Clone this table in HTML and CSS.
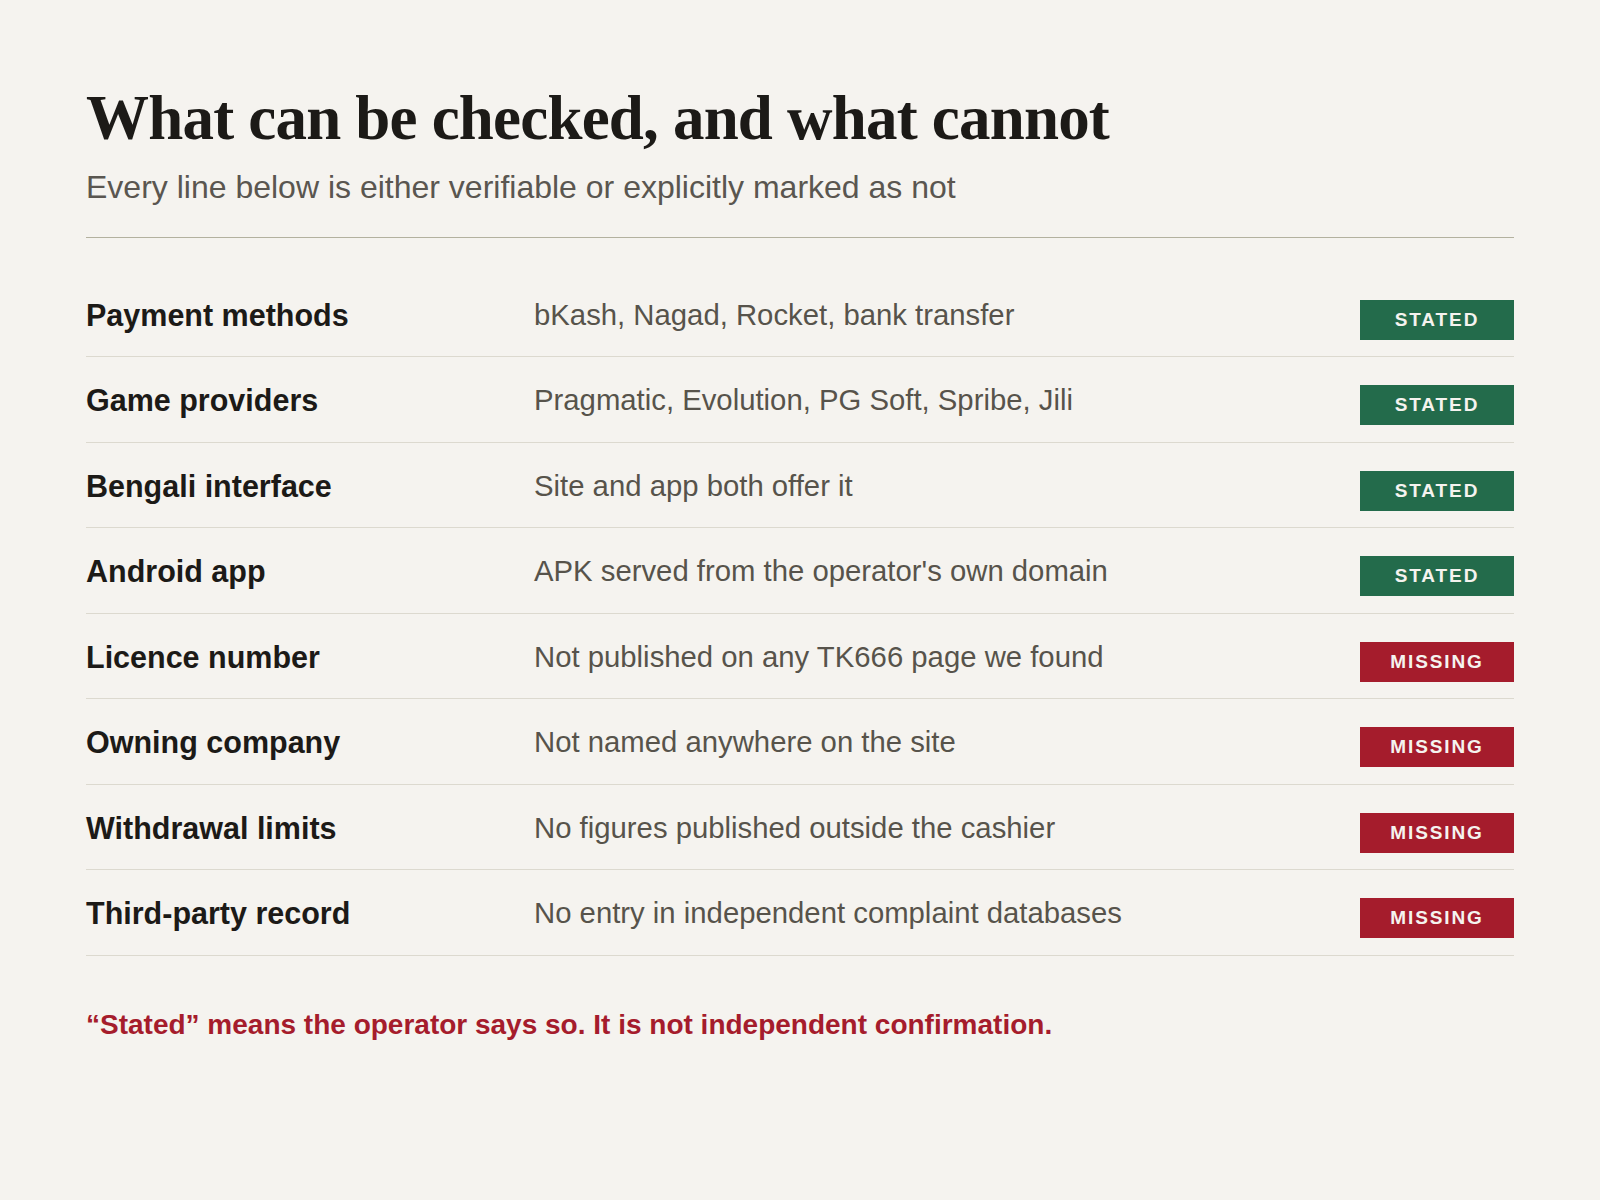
FILE: index.html
```html
<!DOCTYPE html>
<html lang="en">
<head>
<meta charset="utf-8">
<title>What can be checked</title>
<link rel="stylesheet" href="styles.css">
</head>
<body>
<main class="page">
  <header class="head">
    <h1 class="title">What can be checked, and what cannot</h1>
    <p class="sub">Every line below is either verifiable or explicitly marked as not</p>
  </header>
  <section class="rows">
    <div class="row"><div class="label">Payment methods</div><div class="value">bKash, Nagad, Rocket, bank transfer</div><span class="badge stated">STATED</span></div>
    <div class="row"><div class="label">Game providers</div><div class="value">Pragmatic, Evolution, PG Soft, Spribe, Jili</div><span class="badge stated">STATED</span></div>
    <div class="row"><div class="label">Bengali interface</div><div class="value">Site and app both offer it</div><span class="badge stated">STATED</span></div>
    <div class="row"><div class="label">Android app</div><div class="value">APK served from the operator's own domain</div><span class="badge stated">STATED</span></div>
    <div class="row"><div class="label">Licence number</div><div class="value">Not published on any TK666 page we found</div><span class="badge missing">MISSING</span></div>
    <div class="row"><div class="label">Owning company</div><div class="value">Not named anywhere on the site</div><span class="badge missing">MISSING</span></div>
    <div class="row"><div class="label">Withdrawal limits</div><div class="value">No figures published outside the cashier</div><span class="badge missing">MISSING</span></div>
    <div class="row"><div class="label">Third-party record</div><div class="value">No entry in independent complaint databases</div><span class="badge missing">MISSING</span></div>
  </section>
  <p class="note">“Stated” means the operator says so. It is not independent confirmation.</p>
</main>
</body>
</html>
```

FILE: styles.css
```css
html, body {
  margin: 0;
  padding: 0;
  background: #f5f3ef;
}
body {
  font-family: "Liberation Sans", Arial, sans-serif;
  color: #1c1a17;
}
.page {
  padding: 82px 86px 0;
}
.head {
  border-bottom: 1px solid #b3b19f;
  padding-bottom: 30px;
}
.title {
  margin: 0;
  font-family: "Liberation Serif", "Times New Roman", serif;
  font-weight: 700;
  font-size: 63px;
  line-height: 1.15;
  letter-spacing: -0.8px;
  color: #1c1a17;
}
.sub {
  margin: 14px 0 0;
  font-size: 32px;
  line-height: 1.2;
  color: #5a5650;
}
.rows {
  margin-top: 34px;
}
.row {
  display: grid;
  grid-template-columns: 448px 1fr 154px;
  align-items: start;
  padding: 24px 0 16.5px;
  border-bottom: 1px solid #dcd9cf;
}
.label {
  padding-top: 1px;
  font-weight: 700;
  font-size: 30.5px;
  line-height: 1.2;
  color: #1c1a17;
}
.value {
  padding-top: 1px;
  font-size: 29.3px;
  line-height: 1.2;
  color: #57534b;
}
.badge {
  margin-top: 4px;
  display: flex;
  align-items: center;
  justify-content: center;
  height: 40px;
  font-weight: 700;
  font-size: 19px;
  letter-spacing: 1.9px;
  color: #f5f3ef;
}
.stated {
  background: #236b4b;
}
.missing {
  background: #a51c2c;
}
.note {
  margin: 52px 0 0;
  font-weight: 700;
  font-size: 28px;
  line-height: 1.2;
  color: #a51c2c;
}
```
